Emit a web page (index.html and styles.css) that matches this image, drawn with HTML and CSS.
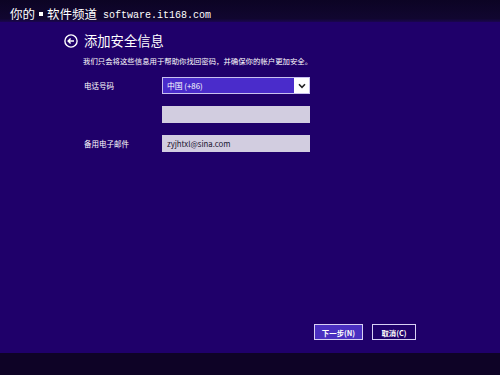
FILE: index.html
```html
<!DOCTYPE html>
<html lang="zh-CN">
<head>
    <meta charset="UTF-8">
    <title>添加安全信息</title>
    <link rel="stylesheet" href="styles.css">
</head>
<body>

    <div class="banner">
        <span class="cn">你的</span><span class="dot"></span><span class="cn">软件频道</span>
        <span class="site">software.it168.com</span>
    </div>

    <div class="page">
        <div class="title-row">
            <svg class="back" width="14" height="14" viewBox="0 0 14 14">
                <circle cx="7" cy="7" r="6.1" fill="none" stroke="#fff" stroke-width="1.4"/>
                <path d="M10 7H4.3M6.6 4.5L4.1 7l2.5 2.5" fill="none" stroke="#fff" stroke-width="1.4"/>
            </svg>
            <h1>添加安全信息</h1>
        </div>
        <p class="desc">我们只会将这些信息用于帮助你找回密码，并确保你的帐户更加安全。</p>

        <div class="form">
            <div class="row">
                <label>电话号码</label>
                <div class="select">
                    <span>中国 (+86)</span>
                    <span class="arrow">
                        <svg width="8" height="6" viewBox="0 0 8 6">
                            <path d="M1 1.3l3 3 3-3" fill="none" stroke="#222" stroke-width="1.6"/>
                        </svg>
                    </span>
                </div>
            </div>
            <div class="row">
                <label></label>
                <div class="input"></div>
            </div>
            <div class="row">
                <label>备用电子邮件</label>
                <div class="input">zyjhtxl@sina.com</div>
            </div>
        </div>

        <div class="buttons">
            <button class="btn primary">下一步(N)</button>
            <button class="btn">取消(C)</button>
        </div>
    </div>

    <div class="bottom"></div>

</body>
</html>
```

FILE: styles.css
```css
body {
    margin: 0;
    width: 500px;
    height: 375px;
    overflow: hidden;
    background-color: #1f006a;
    font-family: "Noto Sans CJK SC", "Noto Sans", sans-serif;
    color: #fff;
}

.banner {
    height: 22px;
    background: linear-gradient(#0c0424, #110630 85%, #1a0550);
    display: flex;
    align-items: center;
    padding-left: 10px;
    padding-top: 6px;
    box-sizing: border-box;
}

.banner .cn {
    font-size: 12.5px;
    line-height: 1;
}

.banner .dot {
    width: 4px;
    height: 4px;
    background-color: #fff;
    margin: 0 4px;
}

.banner .site {
    font-family: "Liberation Mono", monospace;
    font-size: 10px;
    margin-left: 6px;
    margin-top: 2px;
}

.page {
    height: 331px;
    display: flex;
    flex-direction: column;
    padding-left: 64px;
    box-sizing: border-box;
}

.title-row {
    display: flex;
    align-items: center;
    margin-top: 10px;
    height: 18px;
}

.back {
    margin-right: 6px;
}

h1 {
    margin: 0;
    font-size: 13.3px;
    font-weight: normal;
    line-height: 1;
}

.desc {
    margin: 7px 0 0 19px;
    font-size: 7.4px;
    line-height: 1;
}

.form {
    margin: 13px 0 0 20px;
    display: flex;
    flex-direction: column;
    gap: 12px;
}

.row {
    display: flex;
    align-items: center;
}

.row label {
    width: 78px;
    font-size: 7.5px;
}

.select,
.input {
    width: 148px;
    height: 17px;
    box-sizing: border-box;
    display: flex;
    align-items: center;
    font-size: 7.8px;
}

.select {
    background-color: #4a2ccb;
    border: 1px solid #c9c1f0;
    padding-left: 4px;
    justify-content: space-between;
}

.select .arrow {
    width: 15px;
    height: 15px;
    background-color: #fff;
    display: flex;
    align-items: center;
    justify-content: center;
}

.input {
    background-color: #d2cde0;
    color: #1a1530;
    padding-left: 5px;
}

.buttons {
    margin-top: auto;
    margin-bottom: 13px;
    align-self: flex-end;
    margin-right: 84px;
    display: flex;
    gap: 9px;
}

.btn {
    height: 16px;
    padding: 0;
    border: 1px solid #d8d0f4;
    background-color: #1f006a;
    color: #fff;
    font-family: "Noto Sans CJK SC", sans-serif;
    font-size: 7.4px;
    font-weight: bold;
    width: 44px;
}

.btn.primary {
    background-color: #4a2fc0;
    width: 49px;
}

.bottom {
    height: 22px;
    background-color: #0e0326;
}
```
